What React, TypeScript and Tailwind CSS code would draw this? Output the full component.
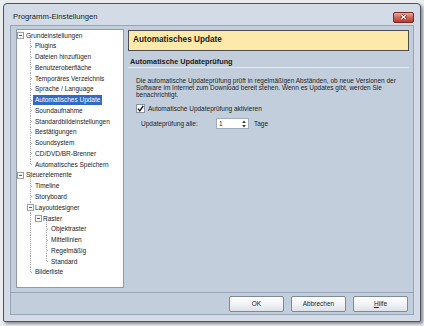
import React from 'react'

type Row = {
  label: string
  level: number
  box?: number
  tail?: number
  elbow?: number
  last?: boolean
  v?: number[]
  selected?: boolean
}

const gutterWidth = [7, 16, 24, 32]

const rows: Row[] = [
  { label: 'Grundeinstellungen', level: 0, box: 3, tail: 13 },
  { label: 'Plugins', level: 1, elbow: 13 },
  { label: 'Dateien hinzufügen', level: 1, elbow: 13 },
  { label: 'Benutzeroberfläche', level: 1, elbow: 13 },
  { label: 'Temporäres Verzeichnis', level: 1, elbow: 13 },
  { label: 'Sprache / Language', level: 1, elbow: 13 },
  { label: 'Automatisches Update', level: 1, elbow: 13, selected: true },
  { label: 'Soundaufnahme', level: 1, elbow: 13 },
  { label: 'Standardbildeinstellungen', level: 1, elbow: 13 },
  { label: 'Bestätigungen', level: 1, elbow: 13 },
  { label: 'Soundsystem', level: 1, elbow: 13 },
  { label: 'CD/DVD/BR-Brenner', level: 1, elbow: 13 },
  { label: 'Automatisches Speichern', level: 1, elbow: 13, last: true },
  { label: 'Steuerelemente', level: 0, box: 3, tail: 13 },
  { label: 'Timeline', level: 1, elbow: 13 },
  { label: 'Storyboard', level: 1, elbow: 13 },
  { label: 'Layoutdesigner', level: 1, v: [13], box: 13 },
  { label: 'Raster', level: 2, v: [13], box: 21, tail: 29 },
  { label: 'Objektraster', level: 3, v: [13], elbow: 29 },
  { label: 'Mittellinien', level: 3, v: [13], elbow: 29 },
  { label: 'Regelmäßig', level: 3, v: [13], elbow: 29 },
  { label: 'Standard', level: 3, v: [13], elbow: 29, last: true },
  { label: 'Bilderliste', level: 1, elbow: 13, last: true },
]

const dot = { stroke: '#a3a3a3', strokeWidth: 1, strokeDasharray: '1 1' }

function Gutter({ row }: { row: Row }) {
  const w = gutterWidth[row.level]
  return (
    <svg width={w} height="100%" className="shrink-0 overflow-visible">
      {row.v?.map((x) => (
        <line key={x} x1={x + 0.5} x2={x + 0.5} y1="0" y2="100%" {...dot} />
      ))}
      {row.tail !== undefined && (
        <line x1={row.tail + 0.5} x2={row.tail + 0.5} y1="50%" y2="100%" {...dot} />
      )}
      {row.elbow !== undefined && (
        <>
          <line x1={row.elbow + 0.5} x2={row.elbow + 0.5} y1="0" y2={row.last ? '50%' : '100%'} {...dot} />
          <line x1={row.elbow + 1} x2={w} y1="50%" y2="50%" {...dot} />
        </>
      )}
      {row.box !== undefined && (
        <g transform="translate(0,-3)">
          <rect x={row.box - 2.5} y="50%" width={6} height={6} fill="#fff" stroke="#9499a2" strokeWidth={1} />
        </g>
      )}
      {row.box !== undefined && (
        <line x1={row.box - 1} x2={row.box + 2} y1="50%" y2="50%" stroke="#4a4a4a" strokeWidth={1} />
      )}
    </svg>
  )
}

function Tree() {
  return (
    <div className="w-[108px] h-[259px] mt-[3px] ml-[5px] bg-white border border-[#8f9bab] text-[6.5px] text-[#222]">
      {rows.map((row) => (
        <div key={row.label} className="flex h-[10.77px]">
          <Gutter row={row} />
          <span
            className={
              row.selected
                ? 'h-full flex items-center px-[2px] whitespace-nowrap bg-[#3169c6] text-white'
                : 'h-full flex items-center px-[2px] whitespace-nowrap'
            }
          >
            {row.label}
          </span>
        </div>
      ))}
    </div>
  )
}

function Button({ children }: { children: React.ReactNode }) {
  return (
    <button className="w-[55px] h-[16px] rounded-[2px] border border-[#7d8a9c] bg-gradient-to-b from-[#ffffff] via-[#f1f3f6] to-[#dde2e9] text-[6.5px] text-[#222] flex items-center justify-center">
      {children}
    </button>
  )
}

export default function App() {
  return (
    <div className="w-[424px] h-[326px] bg-[#ebecee] pt-[3px] pl-[3px] font-['Liberation_Sans',Arial,sans-serif] overflow-hidden">
      <div className="w-[418px] h-[319px] border border-[#4f5661] rounded-t-[4px] rounded-b-[2px] bg-[#d3dbe6] shadow-[2px_2px_3px_rgba(0,0,0,0.4)] px-[6px]">
        {/* title bar */}
        <div className="h-[21px] flex items-center pt-[5px] pl-[3px]">
          <span className="text-[7.7px] text-[#1b1b1b] flex-1">Programm-Einstellungen</span>
          <div className="w-[21px] h-[11px] rounded-[2px] border border-[#7b2a22] bg-gradient-to-b from-[#e9a79b] via-[#d2645a] to-[#b8392e] flex items-center justify-center">
            <svg width="7" height="6" viewBox="0 0 7 6">
              <path d="M1 0.8 L6 5.2 M6 0.8 L1 5.2" stroke="#5a1a14" strokeWidth="2.4" />
              <path d="M1 0.8 L6 5.2 M6 0.8 L1 5.2" stroke="#ffffff" strokeWidth="1.3" />
            </svg>
          </div>
        </div>

        {/* content */}
        <div className="border border-[#97a4b6] bg-[#c3cedc]">
          <div className="h-[266px] flex">
            <Tree />
            <div className="w-[281px] ml-[4px] flex flex-col">
              <div className="mt-[4px] h-[21px] bg-[#fde9a9] border border-[#4e4e4e] flex items-center pl-[4px]">
                <span className="text-[8.2px] font-bold text-[#1a1a1a]">Automatisches Update</span>
              </div>
              <div className="mt-[6px] h-[11px] border-b border-[#e3e8ef] flex items-center pl-[2px]">
                <span className="text-[7.3px] font-bold text-[#1a1a1a]">Automatische Updateprüfung</span>
              </div>
              <p className="mt-[9px] pl-[8px] text-[6.5px] leading-[7px] text-[#222] whitespace-nowrap">
                Die automatische Updateprüfung prüft in regelmäßigen Abständen, ob neue Versionen der
                <br />
                Software im Internet zum Download bereit stehen. Wenn es Updates gibt, werden Sie
                <br />
                benachrichtigt.
              </p>
              <div className="mt-[6px] pl-[8px] flex items-center gap-[3px] h-[9px]">
                <div className="w-[9px] h-[9px] bg-gradient-to-b from-[#f4f4f4] to-[#ffffff] border border-[#8a94a3] flex items-center justify-center">
                  <svg width="7" height="7" viewBox="0 0 7 7">
                    <path d="M1 3.6 L2.8 5.8 L6.2 0.8" fill="none" stroke="#111" strokeWidth="1.3" />
                  </svg>
                </div>
                <span className="text-[6.5px] text-[#222]">Automatische Updateprüfung aktivieren</span>
              </div>
              <div className="mt-[5px] pl-[13px] flex items-center h-[11px]">
                <span className="w-[75px] text-[6.5px] text-[#222]">Updateprüfung alle:</span>
                <div className="w-[33px] h-[11px] bg-white border border-[#a3acb9] flex items-center pl-[2px] pr-[2px]">
                  <span className="flex-1 text-[6.5px] text-[#222]">1</span>
                  <svg width="4" height="8" viewBox="0 0 4 8">
                    <path d="M2 0.5 L3.8 3 L0.2 3 Z M2 7.5 L3.8 5 L0.2 5 Z" fill="#333" />
                  </svg>
                </div>
                <span className="ml-[5px] text-[6.5px] text-[#222]">Tage</span>
              </div>
            </div>
          </div>
          <div className="h-[22px] border-t border-[#97a4b6] flex items-center justify-end gap-[7px] pr-[5px]">
            <Button>OK</Button>
            <Button>Abbrechen</Button>
            <Button>
              <span>
                <span className="underline">H</span>ilfe
              </span>
            </Button>
          </div>
        </div>
      </div>
    </div>
  )
}
